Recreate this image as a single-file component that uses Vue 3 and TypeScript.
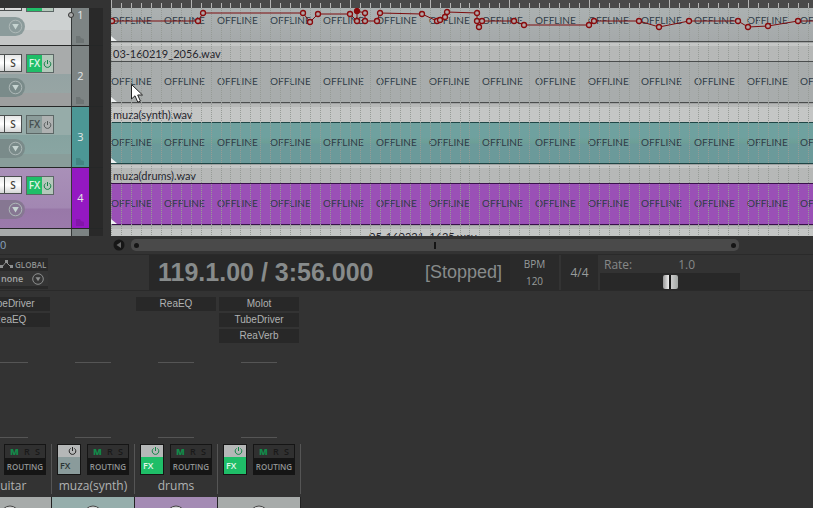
<script setup lang="ts">
import { onBeforeUnmount, onMounted, ref } from 'vue'

interface Track {
  id: number
  file: string
  tone: string
  fxOn: boolean
}

interface Strip {
  name: string
  tone: string
  inserts: string[]
  fxOn: boolean
}

const tracks: Track[] = [
  { id: 1, file: '', tone: 'silver', fxOn: true },
  { id: 2, file: '03-160219_2056.wav', tone: 'grey', fxOn: true },
  { id: 3, file: 'muza(synth).wav', tone: 'teal', fxOn: false },
  { id: 4, file: 'muza(drums).wav', tone: 'violet', fxOn: true },
]

const strips: Strip[] = [
  { name: 'guitar', tone: 'grey', inserts: ['TubeDriver', 'ReaEQ'], fxOn: true },
  { name: 'muza(synth)', tone: 'teal', inserts: [], fxOn: false },
  { name: 'drums', tone: 'violet', inserts: ['ReaEQ'], fxOn: true },
  { name: '', tone: 'grey', inserts: ['Molot', 'TubeDriver', 'ReaVerb'], fxOn: true },
]

// Beat positions, relative to the left edge of the arrange view
const beats = Array.from({ length: 400 }, (_, i) => ({
  x: Math.round((i * 79.66) / 8),
  bar: i % 8 === 0,
}))

// The offline label repeats every 53px across the visible part of a clip
const labelCount = ref(1)
function countLabels() {
  labelCount.value = Math.ceil((window.innerWidth - 111) / 53)
}
countLabels()
onMounted(() => window.addEventListener('resize', countLabels))
onBeforeUnmount(() => window.removeEventListener('resize', countLabels))

const envelope: [number, number][] = [
  [1, 13], [87, 13], [92, 5], [192, 5], [199, 14], [207, 6], [239, 6], [246, 13], [246, 3],
  [254, 5], [254, 13], [266, 13], [269, 5], [311, 6], [326, 13], [329, 12], [334, 9], [336, 4],
  [366, 5], [366, 13], [368, 19], [371, 13], [403, 13], [413, 17], [478, 17], [483, 13],
  [528, 13], [548, 19], [578, 13], [627, 13], [637, 19], [657, 18], [687, 13], [703, 13],
]
const selectedPoint = 8
const envelopeLine = envelope.map((p) => p.join(',')).join(' ')

const rate = ref(1)
const mode = ref('none')
</script>

<template>
  <main class="daw">
    <section class="arrange">
      <div class="panel">
        <div class="panel-head"></div>
        <div class="panel-tracks">
          <article v-for="t in tracks" :key="t.id" class="track" :class="[t.tone, { cut: t.id === 1 }]">
            <div class="controls">
              <div class="row">
                <button class="mute" aria-label="Mute"></button>
                <button class="solo" aria-label="Solo">{{ t.id === 1 ? '' : 'S' }}</button>
                <button class="fx" :class="{ on: t.fxOn }" aria-label="FX">
                  <span class="fx-name">{{ t.id === 1 ? '' : 'FX' }}</span>
                  <span class="fx-power">
                    <svg width="9" height="10" viewBox="0 0 9 10"><path d="M2.6 2.4A3.3 3.3 0 1 0 6.4 2.4M4.5 1V5" /></svg>
                  </span>
                </button>
              </div>
              <button class="input-pick" aria-label="Input">
                <svg width="15" height="15" viewBox="0 0 15 15">
                  <circle cx="7.5" cy="7.5" r="6.3" />
                  <path d="M4.2 5H10.8L7.5 10.6Z" />
                </svg>
              </button>
            </div>
            <div class="number">
              <span>{{ t.id }}</span>
              <svg class="folder" width="9" height="8" viewBox="0 0 9 8"><path d="M0 1H4L5 3L8 4V8H0Z" /></svg>
              <i v-if="t.id === 1" class="env-dot"></i>
            </div>
            <div class="meter"></div>
          </article>
          <div class="track grey sliver"><div class="controls"></div><div class="number"></div><div class="meter"></div></div>
        </div>
      </div>

      <div class="timeline">
        <svg class="ruler" height="8" width="100%">
          <rect v-for="b in beats" :key="b.x" :x="b.x" :y="b.bar ? 0 : 3" width="1" height="8" />
        </svg>
        <div class="lanes">
          <div v-for="t in tracks" :key="t.id" class="lane" :class="[t.tone, { cut: t.id === 1, odd: t.id % 2 }]">
            <div class="clip-name">{{ t.file }}</div>
            <div class="clip">
              <span v-for="n in labelCount" :key="n">OFFLINE</span>
            </div>
          </div>
          <div class="lane odd last"><div class="clip-name shifted">05-160221_1625.wav</div></div>
          <svg class="overlay" width="100%" height="100%">
            <line v-for="b in beats" :key="b.x" :x1="b.x + 0.5" :x2="b.x + 0.5" y1="0" y2="228" class="beat" />
            <polyline :points="envelopeLine" class="env" />
            <circle
              v-for="(p, i) in envelope.slice(0, -1)"
              :key="i"
              :cx="p[0]"
              :cy="p[1]"
              r="2.5"
              class="env-point"
              :class="{ picked: i === selectedPoint }"
            />
            <path v-for="y in [33, 94, 155, 216]" :key="y" :d="`M0 ${y - 5}L6 ${y}H0Z`" class="fade" />
          </svg>
          <svg class="cursor" width="14" height="20" viewBox="0 0 14 20">
            <path d="M.5 .5V15L4 11.8L6.8 18.2L9.4 17.1L6.7 11H11.5Z" />
          </svg>
        </div>
      </div>
    </section>

    <section class="scroll-row">
      <div class="count">0</div>
      <button class="scroll-left" aria-label="Scroll left">
        <svg width="12" height="12" viewBox="0 0 12 12"><circle cx="6" cy="6" r="5.5" /><path d="M8 3V9L3.5 6Z" /></svg>
      </button>
      <div class="scroll-track">
        <div class="scroll-thumb"><i class="dot"></i><i class="mark"></i><i class="dot"></i></div>
      </div>
    </section>

    <section class="transport">
      <div class="global">
        <div class="global-head">
          <svg width="14" height="9" viewBox="0 0 14 9"><path d="M0 7L2 7L6 2L10 6H12" /><path class="knots" d="M0 5H3V8H0ZM5 0H8V3H5ZM10 5H13V8H10Z" /></svg>
          <span>GLOBAL</span>
        </div>
        <label class="global-mode">
          <select v-model="mode" aria-label="Global automation"><option>none</option><option>read</option></select>
          <svg width="12" height="12" viewBox="0 0 12 12"><circle cx="6" cy="6" r="5.3" /><path d="M3.5 4.2H8.5L6 8.3Z" /></svg>
        </label>
      </div>
      <div class="display">
        <span class="position">119.1.00 / 3:56.000</span>
        <span class="state">[Stopped]</span>
      </div>
      <div class="bpm"><span>BPM</span><span>120</span></div>
      <div class="signature">4/4</div>
      <div class="rate">
        <label for="rate"><span>Rate:</span><output>{{ rate.toFixed(1) }}</output></label>
        <input id="rate" v-model.number="rate" type="range" min="0" max="2" step="0.1" />
      </div>
    </section>

    <section class="mixer">
      <article v-for="(s, i) in strips" :key="i" class="strip">
        <div class="inserts">
          <button v-for="name in s.inserts" :key="name">{{ name }}</button>
        </div>
        <div class="sends"></div>
        <div class="strip-body">
          <div class="strip-buttons">
            <button class="strip-fx" :class="{ on: s.fxOn }" aria-label="FX">
              <span class="power"><svg width="9" height="10" viewBox="0 0 9 10"><path d="M2.6 2.4A3.3 3.3 0 1 0 6.4 2.4M4.5 1V5" /></svg></span>
              <span class="label">{{ i === 0 ? '' : 'FX' }}</span>
            </button>
            <button class="routing">
              <span class="flags"><b>M</b><i>R</i><i>S</i></span>
              <span class="label">ROUTING</span>
            </button>
          </div>
          <div class="strip-name">{{ s.name }}</div>
        </div>
        <div class="fader" :class="s.tone">
          <svg width="22" height="11" viewBox="0 0 22 11"><circle cx="11" cy="18" r="9" /></svg>
        </div>
      </article>
    </section>
  </main>
</template>

<style>
body {
  background: #333;
}
</style>

<style scoped>
.daw {
  height: 100vh;
  display: flex;
  flex-direction: column;
  overflow: hidden;
  background: #333;
  color: #b0b2b2;
  font: 11px/14px "Open Sans", "Noto Sans", sans-serif;
}
.daw * {
  box-sizing: border-box;
}
button {
  margin: 0;
  padding: 0;
  border: 0;
  color: inherit;
  font: inherit;
}
svg {
  display: block;
}

/* Arrange view */
.arrange {
  flex: none;
  display: flex;
  height: 236px;
}
.panel {
  flex: none;
  width: 103px;
  margin-right: 8px;
  display: flex;
  flex-direction: column;
}
.panel-head {
  height: 8px;
  flex: none;
}
.panel-tracks {
  flex: 1;
  overflow: hidden;
}
.track {
  display: flex;
  height: 61px;
  border-bottom: 1px solid #252727;
}
.track.cut {
  height: 38px;
  align-items: flex-end;
}
.track.cut > * {
  height: 60px;
  margin-top: -23px;
}
.controls {
  flex: 1;
  display: flex;
  flex-direction: column;
  align-items: flex-start;
  padding-top: 8px;
  gap: 5px;
}
.silver .controls {
  background: linear-gradient(#cdd1d1 45px, #c4c6c6 45px);
}
.grey .controls {
  background: linear-gradient(#a8abab 28px, #94a3a3 28px, #97a5a4 47px, #9d9f9f 47px);
}
.teal .controls {
  background: linear-gradient(#96aca9 28px, #86a3a0 28px, #89a5a2 47px, #899d9a 47px);
}
.violet .controls {
  background: linear-gradient(#a990b8, #a287b2 40px, #9878a8 41px, #9b7aab);
}
.row {
  display: flex;
}
.mute,
.solo {
  height: 18px;
  border: 1px solid #4b4f4f;
  background: linear-gradient(#e6e7e7, #fff 50%, #d5d6d6);
}
.mute {
  width: 4px;
  border-left: 0;
  border-right: 0;
}
.solo {
  width: 18px;
  color: #47453c;
  font-size: 10px;
  font-weight: 600;
  line-height: 16px;
}
.fx {
  display: flex;
  width: 28px;
  height: 19px;
  margin-left: 4px;
  border: 1px solid #5c6766;
  background: #8b9c9a;
  color: #454f4f;
  font-size: 10px;
  font-weight: 600;
  line-height: 17px;
}
.fx-name {
  width: 15px;
  height: 17px;
  text-align: center;
}
.fx.on .fx-name {
  background: #1fbe68;
  color: #dff5e6;
}
.fx-power {
  flex: 1;
  height: 17px;
  display: grid;
  place-items: center;
  background: #aeb1b1;
}
.fx.on .fx-power {
  background: #b4c8bb;
}
.fx-power path {
  fill: none;
  stroke: #555b5b;
  stroke-width: 1;
}
.fx.on .fx-power path {
  stroke: #158048;
}
.input-pick {
  display: flex;
  justify-content: flex-end;
  align-items: center;
  width: 25px;
  height: 19px;
  padding-right: 2px;
  border-radius: 0 10px 10px 0;
  background: #7a8b8a;
}
.silver .input-pick {
  background: #8b9b9b;
}
.violet .input-pick {
  background: #867792;
}
.input-pick circle {
  fill: none;
  stroke: #aeb9b8;
}
.input-pick path {
  fill: #c6d4d1;
}
.number {
  position: relative;
  width: 18px;
  border-left: 1px solid #343838;
  display: grid;
  place-items: center;
  background: #7d8484;
  color: #e4e7e7;
}
.teal .number {
  background: #4c9795;
}
.violet .number {
  background: #9418c2;
}
.folder {
  position: absolute;
  left: 4px;
  bottom: 2px;
}
.folder path {
  fill: #000;
  fill-opacity: 0.12;
}
.env-dot {
  position: absolute;
  left: -4px;
  top: 27px;
  width: 6px;
  height: 6px;
  border: 1px solid #333;
  border-radius: 50%;
  background: #aaa;
}
.meter {
  width: 14px;
  background: #292929;
}
.sliver {
  height: 8px;
  border-bottom: 1px solid #777;
}
.timeline {
  flex: 1;
  min-width: 0;
  display: flex;
  flex-direction: column;
}
.ruler {
  flex: none;
  background: #4a4a4a;
}
.ruler rect {
  fill: #b5b5b5;
}
.lanes {
  position: relative;
  flex: 1;
  overflow: hidden;
}
.lane {
  height: 61px;
  display: flex;
  flex-direction: column;
  background: #b6b8b7;
}
.lane.odd {
  background: #c4c6c5;
}
.lane.cut {
  height: 38px;
  justify-content: flex-end;
}
.lane.last {
  height: 8px;
}
.clip-name {
  flex: none;
  height: 15px;
  padding-left: 2px;
  color: #25252d;
  font-family: Lato, "Open Sans", sans-serif;
  font-size: 11px;
  line-height: 16px;
}
.shifted {
  padding-left: 258px;
}
.clip {
  flex: none;
  display: flex;
  height: 42px;
  margin-bottom: 4px;
  overflow: hidden;
  border-top: 1px solid #4a4d4d;
  border-bottom: 1px solid #4a4d4d;
  box-shadow: 0 1px #a0a2a2;
  background: #a8acac;
  color: #303c47;
  font-family: Lato, "Open Sans", sans-serif;
  font-size: 10px;
  line-height: 38px;
}
.silver .clip-name {
  display: none;
}
.silver .clip {
  background: linear-gradient(#adb3b3, #a5a9aa);
}
.teal .clip {
  background: linear-gradient(#6fa19f 14px, #6c9e96 20px, #6b9a9a 21px);
  border-color: #1f4646;
}
.violet .clip {
  background: #9a50b6;
  border-color: #38104a;
}
.clip span {
  flex: none;
  width: 53px;
}
.overlay {
  position: absolute;
  inset: 0;
}
.beat {
  stroke: #969b96;
  stroke-dasharray: 1 1;
}
.env {
  fill: none;
  stroke: #7c0c0e;
}
.env-point {
  fill: #b0a6a6;
  stroke: #890a0c;
  stroke-width: 1.3;
}
.env-point.picked {
  fill: #890a0c;
}
.fade {
  fill: #eef1f1;
}
.cursor {
  position: absolute;
  left: 20px;
  top: 76px;
}
.cursor path {
  fill: #fff;
  stroke: #222;
}

/* Scroll bar */
.scroll-row {
  flex: none;
  display: flex;
  align-items: center;
  height: 18px;
}
.count {
  flex: none;
  width: 113px;
  color: #8aa3bd;
}
.scroll-left {
  flex: none;
  background: none;
}
.scroll-left circle {
  fill: #161616;
}
.scroll-left path {
  fill: #666;
}
.scroll-track {
  flex: 1;
  padding: 0 74px 0 6px;
}
.scroll-thumb {
  display: flex;
  justify-content: space-between;
  align-items: center;
  height: 12px;
  padding: 0 3px;
  border-radius: 5px;
  background: #4a4a4a;
}
.dot {
  width: 5px;
  height: 5px;
  border-radius: 50%;
  background: #151515;
}
.mark {
  width: 2px;
  height: 7px;
  background: #151515;
}

/* Transport */
.transport {
  flex: none;
  display: flex;
  align-items: stretch;
  height: 37px;
  border-top: 1px solid #2a2a2a;
  border-bottom: 1px solid #2a2a2a;
}
.global {
  flex: none;
  width: 48px;
  margin: 3px 101px 1px 0;
  background: #292929;
}
.global-head {
  display: flex;
  align-items: center;
  gap: 1px;
  height: 13px;
  color: #8e9090;
  font-size: 8px;
  font-weight: 600;
}
.global-head path {
  fill: none;
  stroke: #8e9090;
}
.global-head .knots {
  fill: #8e9090;
  stroke: none;
}
.global-mode {
  display: flex;
  align-items: center;
  justify-content: space-between;
  height: 15px;
  padding-right: 4px;
  background: #353535;
}
.global-mode select {
  appearance: none;
  width: 30px;
  margin: 0;
  padding: 0 0 0 1px;
  border: 0;
  background: none;
  color: #a4a6a6;
  font: 600 9px/14px "Open Sans", sans-serif;
}
.global-mode circle {
  fill: none;
  stroke: #8e9090;
}
.global-mode path {
  fill: #8e9090;
}
.display {
  flex: none;
  display: flex;
  align-items: center;
  justify-content: space-between;
  width: 361px;
  padding: 0 8px 0 9px;
  background: #282828;
  color: #878b8b;
  font-family: "Liberation Sans", Arial, sans-serif;
  line-height: 37px;
}
.position {
  font-size: 25px;
  font-weight: 700;
}
.state {
  font-size: 18px;
}
.bpm,
.signature {
  flex: none;
  display: flex;
  flex-direction: column;
  justify-content: space-around;
  align-items: center;
  background: #2a2a2a;
  color: #989c9c;
  font-size: 10px;
}
.bpm {
  width: 49px;
  margin: 0 2px 0 0;
}
.signature {
  width: 37px;
  font-size: 12px;
}
.rate {
  flex: none;
  width: 140px;
  margin-left: 2px;
  color: #868888;
}
.rate label {
  display: flex;
  gap: 46px;
  height: 18px;
  padding-left: 4px;
  font-size: 12px;
  line-height: 20px;
}
.rate input {
  display: block;
  appearance: none;
  width: 100%;
  height: 17px;
  margin: 0;
  background: #282828;
}
.rate input::-webkit-slider-thumb {
  appearance: none;
  width: 15px;
  height: 14px;
  border-radius: 2px;
  background: linear-gradient(90deg, #999 0, #eee 6px, #161616 6px, #161616 8px, #ccc 8px, #a2a6a4 15px);
}

/* Mixer */
.mixer {
  flex: 1;
  display: flex;
  min-height: 0;
  margin-left: -31px;
  padding-top: 6px;
}
.strip {
  flex: none;
  width: 83px;
  display: flex;
  flex-direction: column;
}
.inserts {
  display: flex;
  flex-direction: column;
  gap: 2px;
  height: 65px;
  padding: 0 2px 0 1px;
}
.inserts button {
  height: 14px;
  background: #282828;
  color: #b0b2b2;
  font: 10px/14px "Liberation Sans", Arial, sans-serif;
}
.sends {
  height: 76px;
  margin: 0 24px 0 23px;
  border-top: 1px solid #555;
  border-bottom: 1px solid #555;
}
.strip-body {
  height: 50px;
  margin-top: 6px;
  border-right: 1px solid #555;
}
.strip-buttons {
  display: flex;
  gap: 6px;
  padding-left: 5px;
}
.strip-fx,
.routing {
  display: flex;
  flex-direction: column;
  height: 31px;
  border: 1px solid #151515;
  font-weight: 600;
}
.strip-fx {
  width: 24px;
  background: #8a9b9b;
  color: #2a3434;
  font-size: 9px;
  text-align: left;
}
.strip-fx.on {
  background: #1fbe68;
  color: #e0f7e8;
}
.power {
  display: flex;
  justify-content: flex-end;
  align-items: center;
  height: 13px;
  padding-right: 3px;
  background: #b5b7b7;
}
.power path {
  fill: none;
  stroke: #222;
}
.on .power path {
  stroke: #128546;
}
.strip-fx .label {
  padding-left: 2px;
  line-height: 17px;
}
.routing {
  width: 42px;
  background: #151515;
  color: #909292;
  font-size: 8px;
}
.flags {
  display: flex;
  justify-content: space-between;
  height: 13px;
  padding: 0 5px;
  background: #303030;
  font-size: 9px;
  line-height: 13px;
}
.flags b {
  color: #128a4a;
}
.flags i {
  color: #191919;
  font-style: normal;
}
.routing .label {
  text-align: center;
  line-height: 17px;
}
.strip-name {
  padding-top: 2px;
  font-size: 12px;
  line-height: 18px;
  text-align: center;
}
.fader {
  flex: 1;
  display: flex;
  justify-content: center;
  align-items: flex-end;
  margin-top: 3px;
  border-right: 1px solid #222;
  background: #a7abaa;
}
.fader.teal {
  background: #96aeac;
}
.fader.violet {
  background: #a48bb4;
}
.fader circle {
  fill: #d6d8d8;
  stroke: #444;
}
</style>
